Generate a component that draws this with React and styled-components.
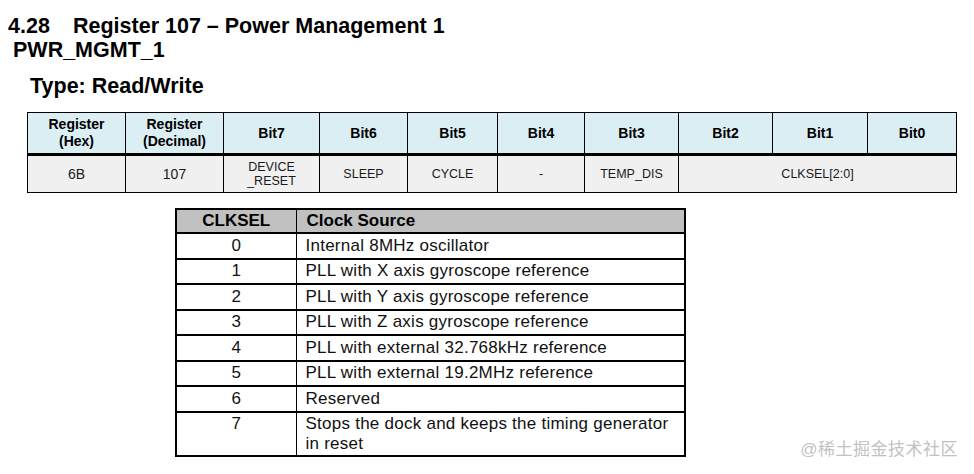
import React from "react";
import styled, { createGlobalStyle } from "styled-components";

const GlobalStyle = createGlobalStyle`
  html, body {
    margin: 0;
    padding: 0;
    background: #ffffff;
  }
  body {
    font-family: "Liberation Sans", Arial, sans-serif;
    color: #000;
  }
`;

const Page = styled.div`
  position: relative;
  width: 974px;
  height: 474px;
  overflow: hidden;
  padding-top: 14px;
  box-sizing: border-box;
`;

const Title = styled.h1`
  margin: 0 0 0 8px;
  font-size: 21.5px;
  line-height: 24px;
  font-weight: bold;
  white-space: nowrap;
`;

const SectionNo = styled.span`
  display: inline-block;
  width: 65px;
`;

const SubTitle = styled.h2`
  margin: 0 0 0 13px;
  font-size: 21.5px;
  line-height: 24px;
  font-weight: bold;
`;

const TypeLine = styled.h3`
  margin: 12px 0 0 30px;
  font-size: 21.5px;
  line-height: 24px;
  font-weight: bold;
`;

const RegTable = styled.table`
  margin: 14px 0 0 27px;
  border-collapse: collapse;
  table-layout: fixed;
  width: 929px;
  border: 1px solid #000;
`;

const HeadCell = styled.th`
  background: #dbeef3;
  border: 1px solid #000;
  border-bottom: 3px solid #000;
  height: 40px;
  padding: 0;
  font-size: 14px;
  line-height: 17px;
  font-weight: bold;
  text-align: center;
  vertical-align: middle;
`;

const BodyCell = styled.td`
  background: #f0f0f0;
  border: 1px solid #000;
  height: 36px;
  padding: 0;
  font-size: ${({ $big }) => ($big ? "14px" : "12.5px")};
  line-height: 14px;
  text-align: center;
  vertical-align: middle;
  color: #1a1a1a;
`;

const ClkTable = styled.table`
  margin: 15px 0 0 175px;
  border-collapse: collapse;
  table-layout: fixed;
  width: 511px;
  border: 2px solid #000;
`;

const ClkHead = styled.th`
  background: #c0c0c0;
  border: 1px solid #000;
  border-bottom-width: 2px;
  height: 22px;
  padding: 0 ${({ $left }) => ($left ? "10px" : "0")};
  font-size: 17px;
  font-weight: bold;
  line-height: 20px;
  text-align: ${({ $left }) => ($left ? "left" : "center")};
`;

const ClkCell = styled.td`
  border: 1px solid #000;
  border-bottom-width: 2px;
  height: ${({ $tall }) => ($tall ? "40px" : "23.5px")};
  padding: ${({ $tall }) => ($tall ? "1px" : "0")} ${({ $left }) => ($left ? "6px 0 9px" : "0")};
  font-size: 17px;
  letter-spacing: 0.25px;
  line-height: 20px;
  text-align: ${({ $left }) => ($left ? "left" : "center")};
  vertical-align: ${({ $tall }) => ($tall ? "top" : "middle")};
  color: #111;
`;

const Watermark = styled.div`
  position: absolute;
  right: 16px;
  bottom: 14px;
  font-family: "Liberation Sans", "Noto Sans CJK SC", sans-serif;
  font-size: 17px;
  color: #c2c2c2;
  letter-spacing: 0.5px;
`;

const regCols = [98, 98, 96, 88, 90, 87, 94, 94, 95, 89];
const bits = ["Bit7", "Bit6", "Bit5", "Bit4", "Bit3", "Bit2", "Bit1", "Bit0"];

const clockSources = [
  "Internal 8MHz oscillator",
  "PLL with X axis gyroscope reference",
  "PLL with Y axis gyroscope reference",
  "PLL with Z axis gyroscope reference",
  "PLL with external 32.768kHz reference",
  "PLL with external 19.2MHz reference",
  "Reserved",
  "Stops the dock and keeps the timing generator in reset",
];

const App = () => {
  return (
    <Page>
      <GlobalStyle />
      <Title>
        <SectionNo>4.28</SectionNo>Register 107 – Power Management 1
      </Title>
      <SubTitle>PWR_MGMT_1</SubTitle>
      <TypeLine>Type: Read/Write</TypeLine>

      <RegTable>
        <colgroup>
          {regCols.map((w, i) => (
            <col key={i} style={{ width: w }} />
          ))}
        </colgroup>
        <thead>
          <tr>
            <HeadCell>
              Register
              <br />
              (Hex)
            </HeadCell>
            <HeadCell>
              Register
              <br />
              (Decimal)
            </HeadCell>
            {bits.map((b) => (
              <HeadCell key={b}>{b}</HeadCell>
            ))}
          </tr>
        </thead>
        <tbody>
          <tr>
            <BodyCell $big>6B</BodyCell>
            <BodyCell $big>107</BodyCell>
            <BodyCell>
              DEVICE
              <br />
              _RESET
            </BodyCell>
            <BodyCell>SLEEP</BodyCell>
            <BodyCell>CYCLE</BodyCell>
            <BodyCell>-</BodyCell>
            <BodyCell>TEMP_DIS</BodyCell>
            <BodyCell colSpan={3}>CLKSEL[2:0]</BodyCell>
          </tr>
        </tbody>
      </RegTable>

      <ClkTable>
        <colgroup>
          <col style={{ width: 120 }} />
          <col />
        </colgroup>
        <thead>
          <tr>
            <ClkHead>CLKSEL</ClkHead>
            <ClkHead $left>Clock Source</ClkHead>
          </tr>
        </thead>
        <tbody>
          {clockSources.map((src, i) => {
            const tall = i === clockSources.length - 1;
            return (
              <tr key={i}>
                <ClkCell $tall={tall}>{i}</ClkCell>
                <ClkCell $tall={tall} $left>
                  {src}
                </ClkCell>
              </tr>
            );
          })}
        </tbody>
      </ClkTable>

      <Watermark>@稀土掘金技术社区</Watermark>
    </Page>
  );
};

export default App;
